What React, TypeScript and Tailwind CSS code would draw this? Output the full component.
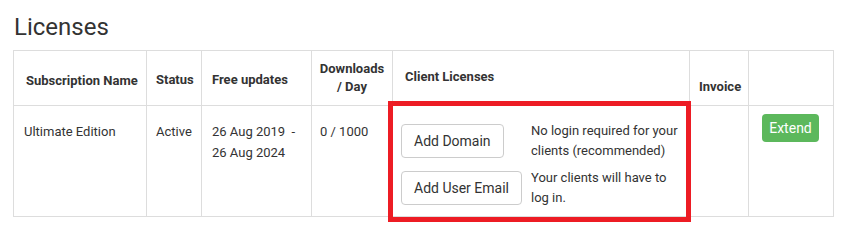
import React from "react";

export default function App() {
  const th = "border border-[#dddddd] font-bold text-[13px] leading-[18px] text-[#333] align-bottom text-left";
  const td = "border border-[#dddddd] text-[13px] leading-[21px] text-[#333] align-top";
  const btn =
    "h-[34px] px-[12px] border border-[#cccccc] rounded-[4px] bg-white text-[14px] text-[#333] whitespace-nowrap";
  return (
    <div
      className="w-[850px] h-[240px] bg-white pl-[13px] pt-[10px]"
      style={{ fontFamily: "Roboto, 'Liberation Sans', sans-serif" }}
    >
      <h1 className="text-[24px] leading-[34px] text-[#333] font-normal pl-[1px] mb-[6px]">Licenses</h1>
      <table className="border-collapse table-fixed w-[820px]">
        <colgroup>
          <col className="w-[133px]" />
          <col className="w-[55px]" />
          <col className="w-[110px]" />
          <col className="w-[81px]" />
          <col className="w-[297px]" />
          <col className="w-[59px]" />
          <col className="w-[85px]" />
        </colgroup>
        <thead>
          <tr className="h-[55px]">
            <th className={`${th} pl-[12px] pb-[15px]`}>Subscription Name</th>
            <th className={`${th} pl-[9px] pb-[16px]`}>Status</th>
            <th className={`${th} pl-[10px] pb-[16px]`}>Free updates</th>
            <th className={`${th} text-center pb-[9px]`}>
              <div className="text-center">Downloads</div>
              <div className="text-center">/ Day</div>
            </th>
            <th className={`${th} pl-[12px] pb-[19px]`}>Client Licenses</th>
            <th className={`${th} pl-[9px] pb-[9px]`}>Invoice</th>
            <th className={th}></th>
          </tr>
        </thead>
        <tbody>
          <tr className="h-[111px]">
            <td className={`${td} pl-[10px] pt-[15px]`}>Ultimate Edition</td>
            <td className={`${td} pl-[9px] pt-[15px]`}>Active</td>
            <td className={`${td} pl-[10px] pt-[15px]`}>
              <div>26 Aug 2019&nbsp; -</div>
              <div>26 Aug 2024</div>
            </td>
            <td className={`${td} pl-[8px] pt-[15px]`}>0 / 1000</td>
            <td className={`${td} relative pl-[8px] pt-[15px]`}>
              <div className="grid grid-cols-[121px_1fr] gap-x-[9px] gap-y-[7px] items-center">
                <div className="flex items-center h-[40px]">
                  <button className={btn}>Add Domain</button>
                </div>
                <div className="text-[13px] leading-[20px]">
                  No login required for your
                  <br />
                  clients (recommended)
                </div>
                <div className="flex items-center h-[40px]">
                  <button className={btn}>Add User Email</button>
                </div>
                <div className="text-[13px] leading-[20px]">
                  Your clients will have to
                  <br />
                  log in.
                </div>
              </div>
              <div className="absolute left-[-5px] top-[-5px] w-[303px] h-[121px] border-[5px] border-[#ed1c24] pointer-events-none" />
            </td>
            <td className={td}></td>
            <td className={`${td} pl-[13px] pt-[8px]`}>
              <button className="h-[28px] w-[57px] rounded-[4px] bg-[#5cb85c] text-white text-[14px] leading-[28px]">
                Extend
              </button>
            </td>
          </tr>
        </tbody>
      </table>
    </div>
  );
}
